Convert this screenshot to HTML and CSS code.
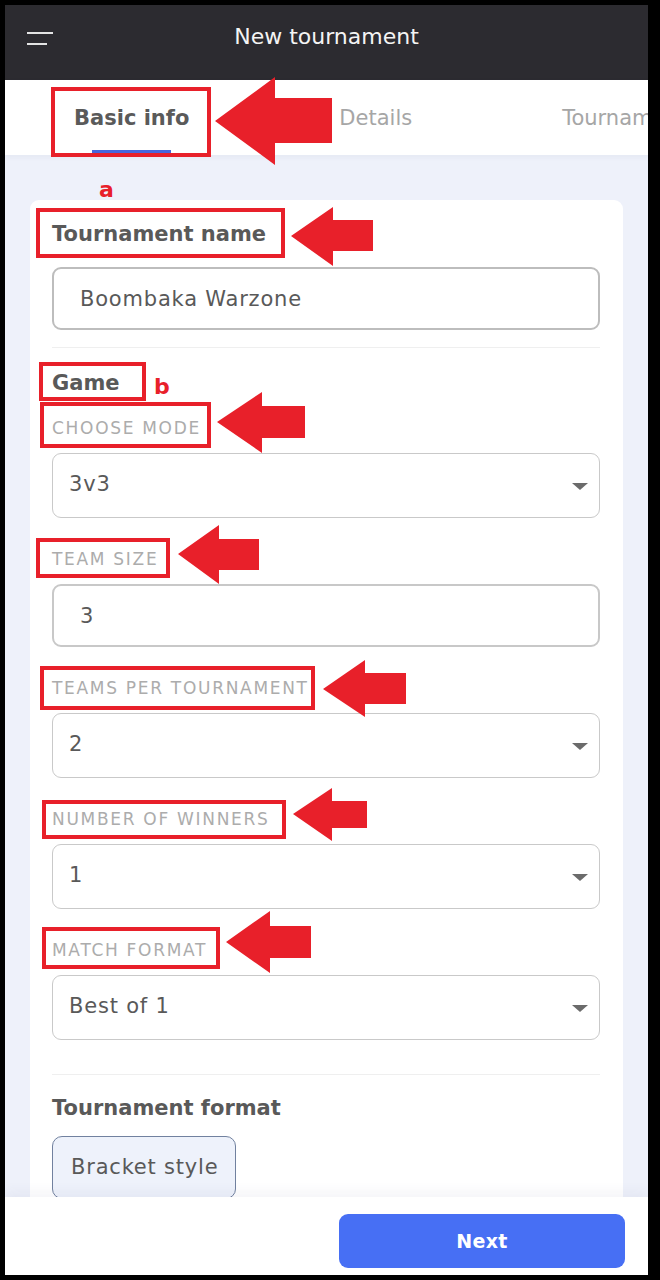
FILE: index.html
```html
<!DOCTYPE html>
<html lang="en">
<head>
    <meta charset="UTF-8">
    <meta name="viewport" content="width=device-width, initial-scale=1.0">
    <title>New tournament</title>
    <link rel="stylesheet" href="styles.css">
</head>
<body>
    <div class="device">
        <!-- Top bar -->
        <header class="topbar">
            <button class="menu" aria-label="Menu"><span></span><span></span></button>
            <h1 class="topbar-title">New tournament</h1>
            <div></div>
        </header>

        <!-- Step tabs -->
        <nav class="tabs">
            <a href="#" class="tab active">Basic info</a>
            <a href="#" class="tab">Details</a>
            <a href="#" class="tab">Tournaments</a>
        </nav>

        <!-- Form -->
        <main class="content">
            <section class="card">
                <h2 class="group-title">Tournament name</h2>
                <div class="input input-name">Boombaka Warzone</div>

                <hr class="divider">

                <h2 class="group-title">Game</h2>
                <div class="field field-first">
                    <div class="field-label">Choose mode</div>
                    <div class="select">3v3</div>
                </div>
                <div class="field">
                    <div class="field-label">Team size</div>
                    <div class="input input-field">3</div>
                </div>
                <div class="field">
                    <div class="field-label">Teams per tournament</div>
                    <div class="select">2</div>
                </div>
                <div class="field">
                    <div class="field-label">Number of winners</div>
                    <div class="select">1</div>
                </div>
                <div class="field">
                    <div class="field-label">Match format</div>
                    <div class="select">Best of 1</div>
                </div>

                <hr class="divider divider-format">

                <h2 class="group-title">Tournament format</h2>
                <div class="chip">Bracket style</div>
            </section>
        </main>

        <footer class="actions">
            <button class="btn-next">Next</button>
        </footer>
    </div>

    <!-- Red annotations drawn over the screenshot -->
    <div class="notes">
        <span class="note-letter letter-a">a</span>
        <span class="note-letter letter-b">b</span>

        <div class="mark mark-tab"></div>
        <div class="mark mark-name"></div>
        <div class="mark mark-game"></div>
        <div class="mark mark-mode"></div>
        <div class="mark mark-size"></div>
        <div class="mark mark-teams"></div>
        <div class="mark mark-winners"></div>
        <div class="mark mark-format"></div>

        <svg class="arrows" viewBox="0 0 660 1280" width="660" height="1280">
            <polygon points="215,121 275,77 275,98 332,98 332,143 275,143 275,165"/>
            <polygon points="291,236 333,207 333,220 373,220 373,251 333,251 333,266"/>
            <polygon points="217,422 262,392 262,406 305,406 305,438 262,438 262,453"/>
            <polygon points="178,554 219,525 219,539 259,539 259,570 219,570 219,584"/>
            <polygon points="323,689 365,660 365,673 406,673 406,704 365,704 365,717"/>
            <polygon points="293,814 332,788 332,801 367,801 367,828 332,828 332,841"/>
            <polygon points="226,942 270,911 270,926 311,926 311,958 270,958 270,973"/>
        </svg>
    </div>
</body>
</html>
```

FILE: styles.css
```css
/* Reset and Base Styles */
* {
    margin: 0;
    padding: 0;
    box-sizing: border-box;
}

body {
    position: relative;
    width: 660px;
    height: 1280px;
    padding: 5px 12px 5px 5px;
    background-color: #000;
    font-family: 'DejaVu Sans', sans-serif;
    color: #595959;
    overflow: hidden;
}

.device {
    width: 643px;
    height: 1270px;
    display: flex;
    flex-direction: column;
    background-color: #eef1fa;
    overflow: hidden;
}

/* Top bar */
.topbar {
    height: 75px;
    flex-shrink: 0;
    display: grid;
    grid-template-columns: 1fr auto 1fr;
    align-items: start;
    padding: 19px 22px 0;
    background-color: #2c2b30;
}

.menu {
    margin-top: 8px;
    width: 26px;
    background: none;
    border: none;
}

.menu span {
    display: block;
    height: 2px;
    width: 26px;
    background-color: #e4e4e4;
}

.menu span + span {
    width: 20px;
    margin-top: 9px;
}

.topbar-title {
    font-size: 22px;
    font-weight: 400;
    line-height: 26px;
    color: #f4f4f4;
}

/* Tabs */
.tabs {
    position: relative;
    z-index: 1;
    height: 75px;
    flex-shrink: 0;
    display: flex;
    gap: 150px;
    padding-left: 69px;
    background-color: #fff;
    box-shadow: 0 2px 6px rgba(40, 50, 90, 0.05);
    white-space: nowrap;
}

.tab {
    position: relative;
    height: 75px;
    padding-top: 26px;
    font-size: 21px;
    line-height: 25px;
    color: #a6a6a6;
    text-decoration: none;
}

.tab.active {
    font-weight: 700;
    color: #5a5a5a;
}

.tab.active::after {
    content: '';
    position: absolute;
    bottom: 0;
    left: 50%;
    width: 79px;
    height: 5px;
    margin-left: -40px;
    background-color: #4866dc;
}

/* Content */
.content {
    flex: 1;
    overflow: hidden;
    padding: 45px 25px 0;
}

.card {
    background-color: #fff;
    border-radius: 9px;
    padding: 22px 23px 40px 22px;
}

.group-title {
    font-size: 21px;
    font-weight: 700;
    line-height: 25px;
    color: #595959;
}

.input,
.select,
.chip {
    display: flex;
    align-items: center;
    font-size: 21px;
    letter-spacing: 0.8px;
    color: #595959;
}

.input {
    height: 63px;
    padding-left: 26px;
    border: 2px solid #bdbdbd;
    border-radius: 9px;
}

.input-name {
    margin-top: 20px;
}

.input-field {
    border-color: #c8c8c8;
    margin-bottom: 2px;
}

.select {
    position: relative;
    height: 65px;
    padding: 0 0 4px 16px;
    border: 1px solid #c9c9c9;
    border-radius: 9px;
}

.select::after {
    content: '';
    position: absolute;
    right: 11px;
    top: 29px;
    border-left: 8px solid transparent;
    border-right: 8px solid transparent;
    border-top: 7px solid #6b6b6b;
}

.divider {
    border: none;
    height: 1px;
    background-color: #efefef;
    margin: 17px 0 23px;
}

.divider-format {
    margin: 34px 0 21px;
}

.field {
    margin-top: 31px;
}

.field-first {
    margin-top: 22px;
}

.field-label {
    font-size: 17px;
    line-height: 20px;
    letter-spacing: 1.7px;
    text-transform: uppercase;
    color: #acacac;
    margin-bottom: 15px;
}

.chip {
    display: inline-flex;
    height: 63px;
    margin-top: 15px;
    padding: 0 17px 2px 18px;
    background-color: #eef2fb;
    border: 1px solid #71819f;
    border-radius: 10px;
}

/* Footer */
.actions {
    position: relative;
    height: 78px;
    flex-shrink: 0;
    display: flex;
    justify-content: flex-end;
    padding: 17px 23px 0;
    background-color: #fff;
    box-shadow: 0 -5px 12px rgba(60, 70, 120, 0.06);
}

.btn-next {
    width: 286px;
    height: 54px;
    border: none;
    border-radius: 9px;
    background-color: #476ff4;
    color: #fff;
    font-family: 'DejaVu Sans', sans-serif;
    font-size: 19px;
    font-weight: 700;
    letter-spacing: 0.3px;
}

/* Annotations */
.notes {
    position: absolute;
    z-index: 10;
    top: 0;
    left: 0;
    width: 660px;
    height: 1280px;
    pointer-events: none;
}

.arrows {
    position: absolute;
    top: 0;
    left: 0;
}

.arrows polygon {
    fill: #e8202a;
}

.note-letter {
    position: absolute;
    font-size: 22px;
    font-weight: 700;
    line-height: 26px;
    color: #e8202a;
}

.letter-a {
    left: 99px;
    top: 177px;
}

.letter-b {
    left: 154px;
    top: 374px;
}

.mark {
    position: absolute;
    border: 4px solid #e8202a;
}

.mark-tab     { left: 51px; top: 87px;  width: 160px; height: 70px; }
.mark-name    { left: 36px; top: 208px; width: 249px; height: 50px; }
.mark-game    { left: 39px; top: 362px; width: 107px; height: 39px; }
.mark-mode    { left: 40px; top: 402px; width: 171px; height: 46px; }
.mark-size    { left: 36px; top: 538px; width: 134px; height: 40px; }
.mark-teams   { left: 40px; top: 666px; width: 275px; height: 44px; }
.mark-winners { left: 42px; top: 800px; width: 244px; height: 39px; }
.mark-format  { left: 42px; top: 927px; width: 178px; height: 42px; }
```
